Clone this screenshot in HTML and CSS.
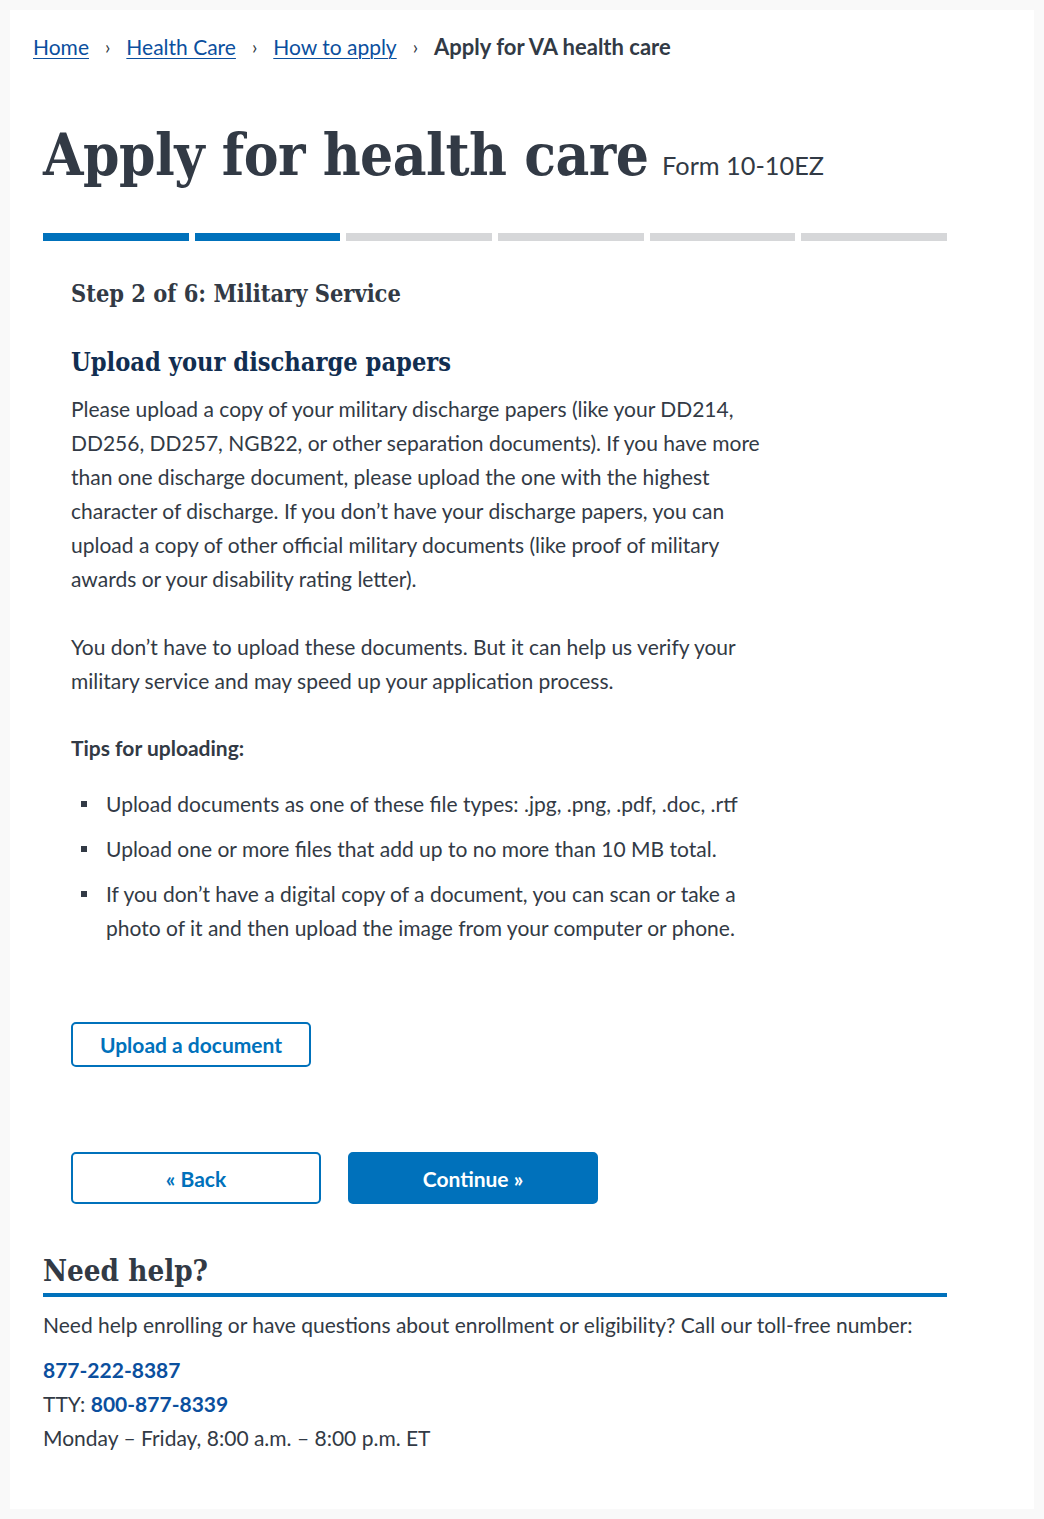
FILE: index.html
```html
<!DOCTYPE html>
<html lang="en">
<head>
<meta charset="utf-8">
<title>Apply for health care</title>
<link rel="stylesheet" href="styles.css">
</head>
<body>
<div class="card">
  <nav class="breadcrumbs" aria-label="Breadcrumb">
    <a href="#">Home</a><span class="sep">›</span><a href="#">Health Care</a><span class="sep">›</span><a href="#">How to apply</a><span class="sep">›</span><span class="current">Apply for VA health care</span>
  </nav>

  <main class="main">
    <h1 class="title">Apply for health care <span class="form-no">Form 10-10EZ</span></h1>

    <div class="progress">
      <div class="seg done"></div>
      <div class="seg done"></div>
      <div class="seg"></div>
      <div class="seg"></div>
      <div class="seg"></div>
      <div class="seg"></div>
    </div>

    <section class="form">
      <h2 class="step">Step 2 of 6: Military Service</h2>
      <h3 class="upload-title">Upload your discharge papers</h3>
      <p class="text">Please upload a copy of your military discharge papers (like your DD214, DD256, DD257, NGB22, or other separation documents). If you have more than one discharge document, please upload the one with the highest character of discharge. If you don’t have your discharge papers, you can upload a copy of other official military documents (like proof of military awards or your disability rating letter).</p>
      <p class="text">You don’t have to upload these documents. But it can help us verify your military service and may speed up your application process.</p>
      <p class="text tips">Tips for uploading:</p>
      <ul class="tips-list">
        <li>Upload documents as one of these file types: .jpg, .png, .pdf, .doc, .rtf</li>
        <li>Upload one or more files that add up to no more than 10 MB total.</li>
        <li>If you don’t have a digital copy of a document, you can scan or take a photo of it and then upload the image from your computer or phone.</li>
      </ul>

      <button class="btn btn-outline btn-upload" type="button">Upload a document</button>

      <div class="nav-buttons">
        <button class="btn btn-outline btn-nav" type="button">« Back</button>
        <button class="btn btn-primary btn-nav" type="button">Continue »</button>
      </div>
    </section>

    <section class="help">
      <h2 class="help-title">Need help?</h2>
      <p class="help-text">Need help enrolling or have questions about enrollment or eligibility? Call our toll-free number:</p>
      <p class="help-line"><a class="phone" href="#">877-222-8387</a></p>
      <p class="help-line">TTY: <a class="phone" href="#">800-877-8339</a></p>
      <p class="help-line">Monday – Friday, 8:00 a.m. – 8:00 p.m. ET</p>
    </section>
  </main>
</div>
</body>
</html>
```

FILE: styles.css
```css
* { box-sizing: border-box; }

html, body {
  margin: 0;
  padding: 0;
}

body {
  background: #f9f9f9;
  padding: 10px;
  font-family: "Lato", "Source Sans Pro", "Liberation Sans", sans-serif;
  color: #323a45;
}

.card {
  background: #ffffff;
  min-height: 1499px;
  padding: 22px 0 0 23px;
}

/* Breadcrumbs */
.breadcrumbs {
  font-size: 21px;
  line-height: 30px;
  height: 30px;
  display: flex;
  align-items: center;
  white-space: nowrap;
}
.breadcrumbs a {
  color: #0b4f9e;
  text-decoration: underline;
  text-underline-offset: 3px;
  text-decoration-thickness: 1px;
}
.breadcrumbs .sep {
  color: #323a45;
  margin: 0 16px;
  font-size: 19px;
}
.breadcrumbs .current {
  font-weight: 700;
  color: #323a45;
  font-size: 22px;
}

/* Main */
.main {
  margin-left: 10px;
  width: 904px;
}

.title {
  font-family: "DejaVu Serif Condensed", "DejaVu Serif", serif;
  font-stretch: condensed;
  font-weight: 700;
  font-size: 58px;
  line-height: 70px;
  margin: 58px 0 0;
  color: #323a45;
  letter-spacing: -0.5px;
  white-space: nowrap;
}
.form-no {
  font-family: "Lato", "Source Sans Pro", sans-serif;
  font-stretch: normal;
  font-weight: 400;
  font-size: 25.3px;
  letter-spacing: 0;
  margin-left: -4px;
}

.progress {
  display: flex;
  gap: 6px;
  margin-top: 33px;
}
.seg {
  flex: 1;
  height: 8px;
  background: #d6d7d9;
}
.seg.done { background: #0071bb; }

/* Form */
.form {
  padding-left: 28px;
}
.step {
  font-family: "DejaVu Serif Condensed", "DejaVu Serif", serif;
  font-stretch: condensed;
  font-weight: 700;
  font-size: 23.4px;
  line-height: 34px;
  margin: 36px 0 0;
  color: #323a45;
}
.upload-title {
  font-family: "DejaVu Serif Condensed", "DejaVu Serif", serif;
  font-stretch: condensed;
  font-weight: 700;
  font-size: 25.2px;
  line-height: 36px;
  margin: 33px 0 0;
  color: #112e51;
}
.text {
  font-size: 21px;
  line-height: 34px;
  margin: 12px 0 0;
  width: 700px;
}
.text + .text { margin-top: 34px; }
.tips { font-weight: 700; margin-top: 33px !important; }

.tips-list {
  list-style: none;
  margin: 22px 0 0;
  padding: 0 0 0 35px;
  width: 720px;
  font-size: 21px;
  line-height: 34px;
}
.tips-list li {
  position: relative;
  margin-bottom: 11px;
}
.tips-list li::before {
  content: "";
  position: absolute;
  left: -25px;
  top: 14px;
  width: 6px;
  height: 6px;
  background: #323a45;
}

.btn {
  font-family: "Lato", "Source Sans Pro", sans-serif;
  font-weight: 700;
  font-size: 21px;
  border-radius: 5px;
  cursor: pointer;
  display: inline-flex;
  align-items: center;
  justify-content: center;
}
.btn-outline {
  background: #ffffff;
  color: #0071bb;
  border: 2px solid #0071bb;
}
.btn-primary {
  background: #0071bb;
  color: #ffffff;
  border: 2px solid #0071bb;
}
.btn-upload {
  margin-top: 66px;
  width: 240px;
  height: 45px;
}
.nav-buttons {
  display: flex;
  gap: 27px;
  margin-top: 85px;
}
.btn-nav {
  width: 250px;
  height: 52px;
}

/* Help */
.help {
  margin-top: 48px;
}
.help-title {
  font-family: "DejaVu Serif Condensed", "DejaVu Serif", serif;
  font-stretch: condensed;
  font-weight: 700;
  font-size: 29.3px;
  line-height: 38px;
  margin: 0;
  padding-bottom: 3px;
  border-bottom: 4px solid #0071bb;
  color: #323a45;
}
.help-text {
  font-size: 21px;
  line-height: 34px;
  margin: 11px 0 0;
  white-space: nowrap;
}
.help-line {
  font-size: 21px;
  line-height: 34px;
  margin: 0;
}
.help-text + .help-line { margin-top: 11px; }
.phone {
  color: #0b4f9e;
  font-weight: 700;
  text-decoration: none;
}
```
